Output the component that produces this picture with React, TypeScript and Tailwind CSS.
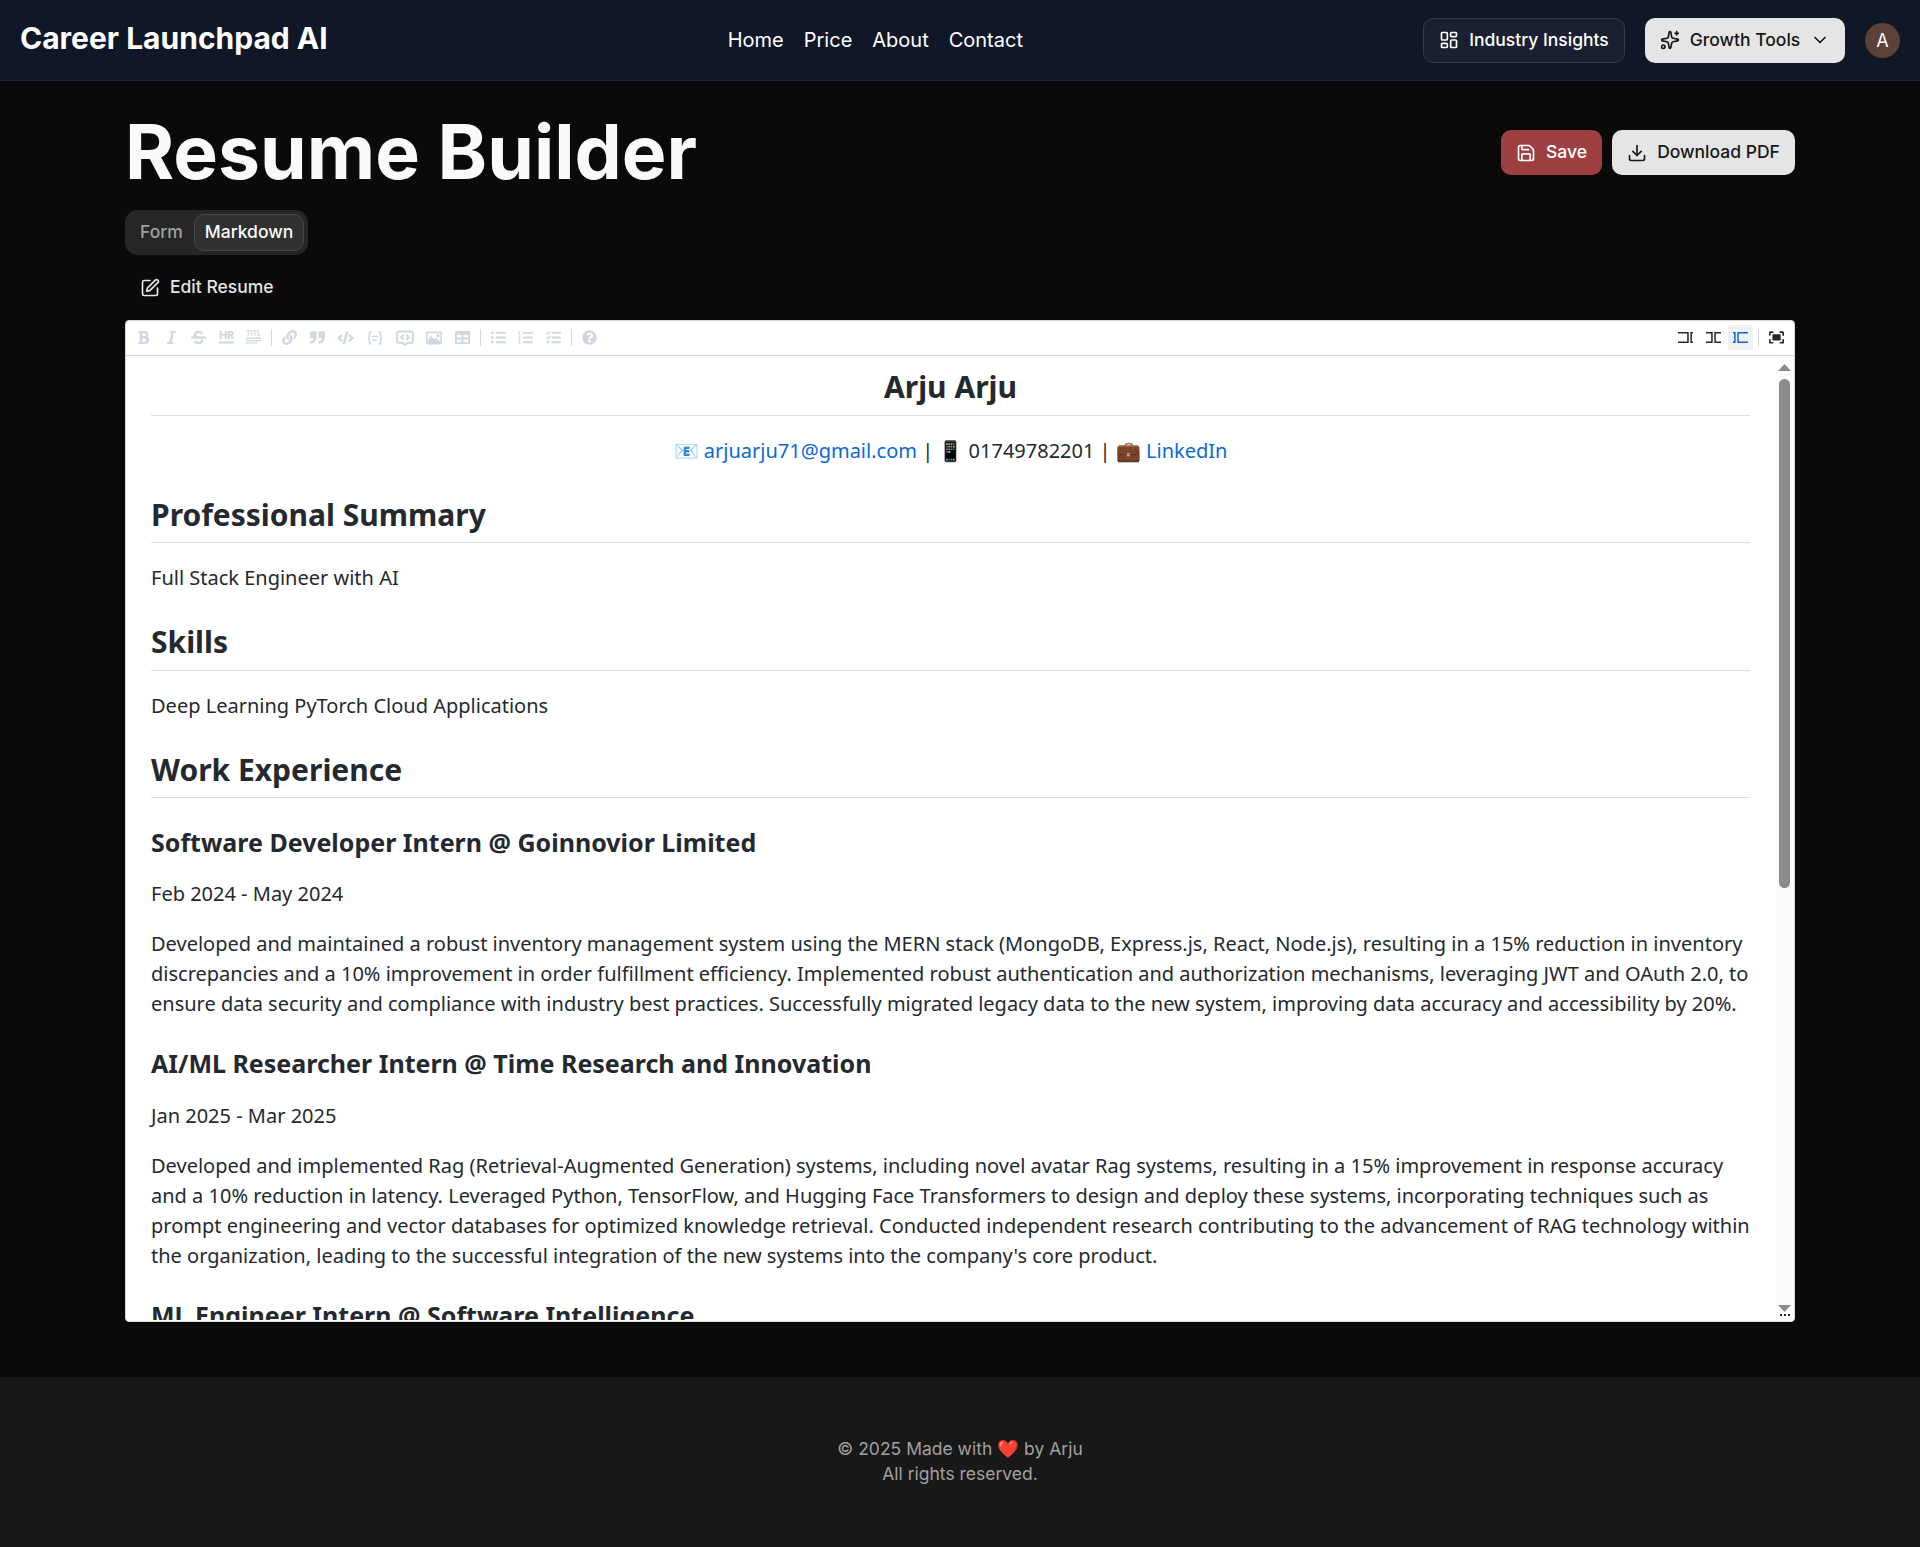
import React from "react";
import { ChevronDown, Download, LayoutDashboard, PenBox, Save, Sparkles } from "lucide-react";
import { FaBold, FaItalic, FaStrikethrough, FaLink, FaCode, FaListUl, FaListOl, FaTasks, FaQuestionCircle, FaTable } from "react-icons/fa";

const iconClass = "h-[15px] w-[15px]";

function Cell({ width = "w-[25px]", active = false, children }: { width?: string; active?: boolean; children: React.ReactNode }) {
  return (
    <button
      className={`flex h-[25px] shrink-0 items-center justify-center rounded-[2.5px] ${width} ${active ? "bg-[#eff1f3] text-[#0969da]" : ""}`}
    >
      {children}
    </button>
  );
}

function Divider() {
  return <div className="mx-[2.5px] h-[17px] w-px shrink-0 bg-[#d0d7de]" />;
}

function HrIcon() {
  return (
    <svg viewBox="0 0 15 15" className="h-[15px] w-[15px] overflow-visible" fill="currentColor">
      <text x="0" y="9" fontFamily="Inter" fontWeight="800" fontSize="11" textLength="15" lengthAdjust="spacingAndGlyphs">H<tspan fontSize="10">R</tspan></text>
      <rect x="0" y="11.5" width="15" height="2" />
    </svg>
  );
}

function TitleIcon() {
  return (
    <svg viewBox="0 0 15 15" className="h-[15px] w-[15px] overflow-visible" fill="currentColor">
      <text x="0" y="6" fontFamily="Inter" fontWeight="700" fontSize="6.9" textLength="15" lengthAdjust="spacingAndGlyphs">TITL</text>
      <rect x="0" y="7.5" width="15" height="1.4" />
      <rect x="0" y="10" width="15" height="1.2" />
      <rect x="0" y="12.3" width="11" height="1.2" />
    </svg>
  );
}

function QuoteIcon() {
  return (
    <svg viewBox="0 0 520 520" className={iconClass} fill="currentColor">
      <path d="M520 95.75v130c0 139.16-62.87 211.3-194.96 246.69-15.46 4.15-30.64-7.55-30.64-23.56v-34.42c0-10.22 6.32-19.43 15.93-22.9 67.03-24.22 104.05-41.85 104.05-117.06h-73.13c-26.92 0-48.75-21.83-48.75-48.75v-130C292.5 68.83 314.33 47 341.25 47h130C498.17 47 520 68.83 520 95.75zM178.75 47h-130C21.83 47 0 68.83 0 95.75v130c0 26.92 21.83 48.75 48.75 48.75h73.13c0 75.21-37.02 92.84-104.05 117.06-9.61 3.47-15.93 12.68-15.93 22.9v34.42c0 16.01 15.18 27.71 30.64 23.56C164.63 437.05 227.5 364.91 227.5 225.75v-130C227.5 68.83 205.67 47 178.75 47z" />
    </svg>
  );
}

function CodeBlockIcon() {
  return (
    <svg viewBox="0 0 16 16" className="h-4 w-4" fill="none" stroke="currentColor" strokeWidth="1.7">
      <path d="M4.4 2.2H3.8C2.6 2.2 2.4 3 2.4 4v2c0 1-.4 1.8-1.6 2 1.2.2 1.6 1 1.6 2v2c0 1 .2 1.8 1.4 1.8h.6M11.6 2.2h.6c1.2 0 1.4.8 1.4 1.8v2c0 1 .4 1.8 1.6 2-1.2.2-1.6 1-1.6 2v2c0 1-.2 1.8-1.4 1.8h-.6" />
      <path d="M5 6.3h6.2M5 10.2h5" strokeWidth="1.3" />
    </svg>
  );
}

function CommentIcon() {
  return (
    <svg viewBox="0 0 18 16" className="h-4 w-[18px]" fill="none" stroke="currentColor">
      <path d="M2.2 1.6h13.6l1.1 1.1v8.9l-1.1 1.1h-4L9 15.1l-2.8-2.4h-4l-1.1-1.1V2.7z" strokeWidth="2" strokeLinejoin="round" />
      <path d="M7.6 4.7 5.2 7.2l2.4 2.5M10.4 4.7l2.4 2.5-2.4 2.5" strokeWidth="1.9" />
    </svg>
  );
}

function ImageIcon() {
  return (
    <svg viewBox="0 0 20 20" className="h-4 w-4" fill="currentColor">
      <path d="M15 9c1.1 0 2-.9 2-2s-.9-2-2-2-2 .9-2 2 .9 2 2 2zm4-7H1c-.55 0-1 .45-1 1v14c0 .55.45 1 1 1h18c.55 0 1-.45 1-1V3c0-.55-.45-1-1-1zm-1 13l-6-5-2 2-4-5-4 8V4h16v11z" />
    </svg>
  );
}

function EditIcon() {
  return (
    <svg viewBox="0 0 520 520" className={iconClass} fill="currentColor">
      <polygon points="0 71.293 0 122 319 122 319 397 0 397 0 449.707 372 449.707 372 71.293" />
      <polygon points="429 71.293 520 71.293 520 122 481 123 481 396 520 396 520 449.707 429 449.707" />
    </svg>
  );
}

function LiveIcon() {
  return (
    <svg viewBox="0 0 520 520" className={iconClass} fill="currentColor">
      <polygon points="0 71.293 0 122 179 122 179 397 0 397 0 449.707 232 449.707 232 71.293" />
      <polygon points="289 71.293 520 71.293 520 122 341 123 341 396 520 396 520 449.707 289 449.707" />
    </svg>
  );
}

function PreviewIcon() {
  return (
    <svg viewBox="0 0 520 520" className={iconClass} fill="currentColor">
      <polygon points="0 71.293 0 122 38.023 123 38.023 398 0 397 0 449.707 91.023 450.413 91.023 72.293" />
      <polygon points="148.023 72.293 520 71.293 520 122 200.023 124 200.023 397 520 396 520 449.707 148.023 450.413" />
    </svg>
  );
}

function FullscreenIcon() {
  return (
    <svg viewBox="0 0 520 520" className={iconClass} fill="currentColor">
      <path d="M118 171.13v171.07c0 11.57 8.68 23.13 23.13 23.13h241.5c11.57 0 23.14-8.67 23.14-23.13V171.13c0-11.56-8.68-23.13-23.14-23.13h-241.5C126.67 148 118 156.68 118 171.13zM465.35 413.44H370v57.78h104.02c26.01 0 46.23-20.22 46.23-46.22V321h-57.79v92.44zM471.02 43H367v57.78h95.35v95.33h57.79V89.22C517.25 63.22 497.03 43 471.02 43zM57.79 100.78h95.35V43H46.23C20.23 43 0 63.22 0 89.22v104h57.79zM57.79 321H0v104c0 26 20.23 46.22 46.23 46.22h104.02v-57.78H57.79z" />
    </svg>
  );
}

function Header() {
  return (
    <header className="flex h-[81px] items-center justify-between border-b border-[#1e2939] bg-[#101828] px-5">
      <div className="pb-1 text-[30px] leading-[40px] font-bold text-white">Career Launchpad AI</div>
      <nav className="flex gap-5 text-[20px] leading-[30px] text-white">
        <a>Home</a>
        <a>Price</a>
        <a>About</a>
        <a>Contact</a>
      </nav>
      <div className="flex items-center gap-5 text-[17.5px] leading-[25px] font-medium">
        <button className="flex h-[45px] w-[202px] items-center justify-center gap-2.5 rounded-[10px] border border-[#343b49] bg-[#1a202f] text-white">
          <LayoutDashboard size={20} />
          <span className="pb-0.5">Industry Insights</span>
        </button>
        <button className="flex h-[45px] w-[200px] items-center justify-center gap-2.5 rounded-[10px] bg-[#e5e5e5] text-[#171717]">
          <Sparkles size={20} />
          <span className="pb-0.5">Growth Tools</span>
          <ChevronDown size={20} />
        </button>
        <div className="flex h-[35px] w-[35px] items-center justify-center rounded-full bg-[#5d4037] text-[18px] font-normal text-white">A</div>
      </div>
    </header>
  );
}

function Toolbar() {
  return (
    <div className="flex h-[35px] shrink-0 items-center justify-between border-b border-[#d0d7de] px-[5px] pb-px text-[#24292f]">
      <div className="flex items-center gap-[2.5px] text-[#d0d7de]">
        <Cell><FaBold className={iconClass} /></Cell>
        <Cell><FaItalic className={iconClass} /></Cell>
        <Cell><FaStrikethrough className={iconClass} /></Cell>
        <Cell><HrIcon /></Cell>
        <Cell><TitleIcon /></Cell>
        <Divider />
        <Cell><FaLink className={iconClass} /></Cell>
        <Cell><QuoteIcon /></Cell>
        <Cell width="w-[27px]"><FaCode className="h-[14px] w-[17px]" /></Cell>
        <Cell width="w-[27px]"><CodeBlockIcon /></Cell>
        <Cell width="w-[27.5px]"><CommentIcon /></Cell>
        <Cell width="w-[26.25px]"><ImageIcon /></Cell>
        <Cell><FaTable className={iconClass} /></Cell>
        <Divider />
        <Cell><FaListUl className={iconClass} /></Cell>
        <Cell><FaListOl className={iconClass} /></Cell>
        <Cell><FaTasks className={iconClass} /></Cell>
        <Divider />
        <Cell><FaQuestionCircle className={iconClass} /></Cell>
      </div>
      <div className="flex items-center gap-[2.5px]">
        <Cell><EditIcon /></Cell>
        <Cell><LiveIcon /></Cell>
        <Cell active><PreviewIcon /></Cell>
        <Divider />
        <Cell><FullscreenIcon /></Cell>
      </div>
    </div>
  );
}

function H2({ children, className = "mt-[30px]" }: { children: React.ReactNode; className?: string }) {
  return (
    <h2 className={`mb-5 border-b border-[#d8dee4] pb-[9px] text-[30px] leading-[37.5px] font-bold ${className}`}>{children}</h2>
  );
}

function H3({ children }: { children: React.ReactNode }) {
  return <h3 className="mt-[30px] mb-[22px] text-[25px] leading-[29.25px] font-bold">{children}</h3>;
}

function P({ children }: { children: React.ReactNode }) {
  return <p className="mb-5">{children}</p>;
}

function Preview() {
  return (
    <article className="min-w-0 flex-1 overflow-hidden px-[25px] pt-[12.15px] font-['Noto_Sans',sans-serif] text-[20px] leading-[30px] text-[#24292f]">
      <H2 className="text-center">Arju Arju</H2>
      <p className="mb-5 text-center">
        📧 <a className="text-[#0969da]">arjuarju71@gmail.com</a> | 📱 01749782201 | 💼 <a className="text-[#0969da]">LinkedIn</a>
      </p>
      <H2>Professional Summary</H2>
      <P>Full Stack Engineer with AI</P>
      <H2>Skills</H2>
      <P>Deep Learning PyTorch Cloud Applications</P>
      <H2>Work Experience</H2>
      <H3>Software Developer Intern @ Goinnovior Limited</H3>
      <P>Feb 2024 - May 2024</P>
      <P>
        Developed and maintained a robust inventory management system using the MERN stack (MongoDB, Express.js, React, Node.js), resulting in a 15% reduction in inventory discrepancies and a 10% improvement in order fulfillment efficiency. Implemented robust authentication and authorization mechanisms, leveraging JWT and OAuth 2.0, to ensure data security and compliance with industry best practices. Successfully migrated legacy data to the new system, improving data accuracy and accessibility by 20%.
      </P>
      <H3>AI/ML Researcher Intern @ Time Research and Innovation</H3>
      <P>Jan 2025 - Mar 2025</P>
      <P>
        Developed and implemented Rag (Retrieval-Augmented Generation) systems, including novel avatar Rag systems, resulting in a 15% improvement in response accuracy and a 10% reduction in latency. Leveraged Python, TensorFlow, and Hugging Face Transformers to design and deploy these systems, incorporating techniques such as prompt engineering and vector databases for optimized knowledge retrieval. Conducted independent research contributing to the advancement of RAG technology within the organization, leading to the successful integration of the new systems into the company's core product.
      </P>
      <H3>ML Engineer Intern @ Software Intelligence</H3>
    </article>
  );
}

function Scrollbar() {
  return (
    <div className="flex w-[19px] shrink-0 flex-col items-center bg-[#fcfcfc] pt-2">
      <svg width="13" height="7" fill="#8b8b8b"><path d="M6.5 0 13 7H0z" /></svg>
      <div className="mt-2 h-[509px] w-[11px] rounded-full bg-[#8b8b8b]" />
      <div className="flex-1" />
      <svg width="13" height="7" fill="#8b8b8b"><path d="M0 0h13L6.5 7z" /></svg>
      <div className="mt-[2px] mb-[4px] flex gap-[2px]">
        <span className="h-[2px] w-[2px] bg-[#24292f]" />
        <span className="h-[2px] w-[2px] bg-[#24292f]" />
        <span className="h-[2px] w-[2px] bg-[#24292f]" />
      </div>
    </div>
  );
}

export default function App() {
  return (
    <div className="flex h-[1547px] flex-col bg-[#0a0a0a] font-[Inter,sans-serif]">
      <Header />
      <main className="flex flex-1 flex-col px-[125px] pt-[34px]">
        <div className="flex h-[75px] items-center justify-between">
          <h1 className="pb-0.5 text-[75px] leading-[75px] font-bold text-[#fafafa]">Resume Builder</h1>
          <div className="flex gap-2.5 text-[17.5px] leading-[25px] font-medium">
            <button className="flex h-[45px] w-[101px] items-center justify-center gap-2.5 rounded-[10px] bg-[#9e4042] text-white">
              <Save size={20} />
              <span className="pb-0.5">Save</span>
            </button>
            <button className="flex h-[45px] w-[183px] items-center justify-center gap-2.5 rounded-[10px] bg-[#e5e5e5] text-[#171717]">
              <Download size={20} />
              <span className="pb-0.5">Download PDF</span>
            </button>
          </div>
        </div>
        <div className="mt-5 flex h-[45px] w-[183px] items-center rounded-[12.5px] bg-[#262626] p-[4px] text-[17.5px] leading-[25px] font-medium">
          <div className="flex-1 pb-0.5 text-center text-[#a1a1a1]">Form</div>
          <div className="flex h-[37px] w-[110px] items-center justify-center rounded-[10px] border border-[#494949] bg-[#303030] pb-0.5 text-[#fafafa]">Markdown</div>
        </div>
        <button className="mt-2.5 flex h-[45px] items-center gap-2.5 self-start px-[15px] text-[17.5px] font-medium text-[#e5e5e5]">
          <PenBox size={20} />
          Edit Resume
        </button>
        <div className="mt-2.5 flex h-[1002px] flex-col overflow-hidden rounded-[4px] border border-[#d0d7de] bg-white">
          <Toolbar />
          <div className="mb-[1px] flex min-h-0 flex-1">
            <Preview />
            <Scrollbar />
          </div>
        </div>
      </main>
      <footer className="h-[170px] bg-[#181818] pt-[59px] text-center text-[17.5px] leading-[25px] text-[#a1a1a1]">
        <p>© 2025 Made with ❤️ by Arju</p>
        <p>All rights reserved.</p>
      </footer>
    </div>
  );
}
